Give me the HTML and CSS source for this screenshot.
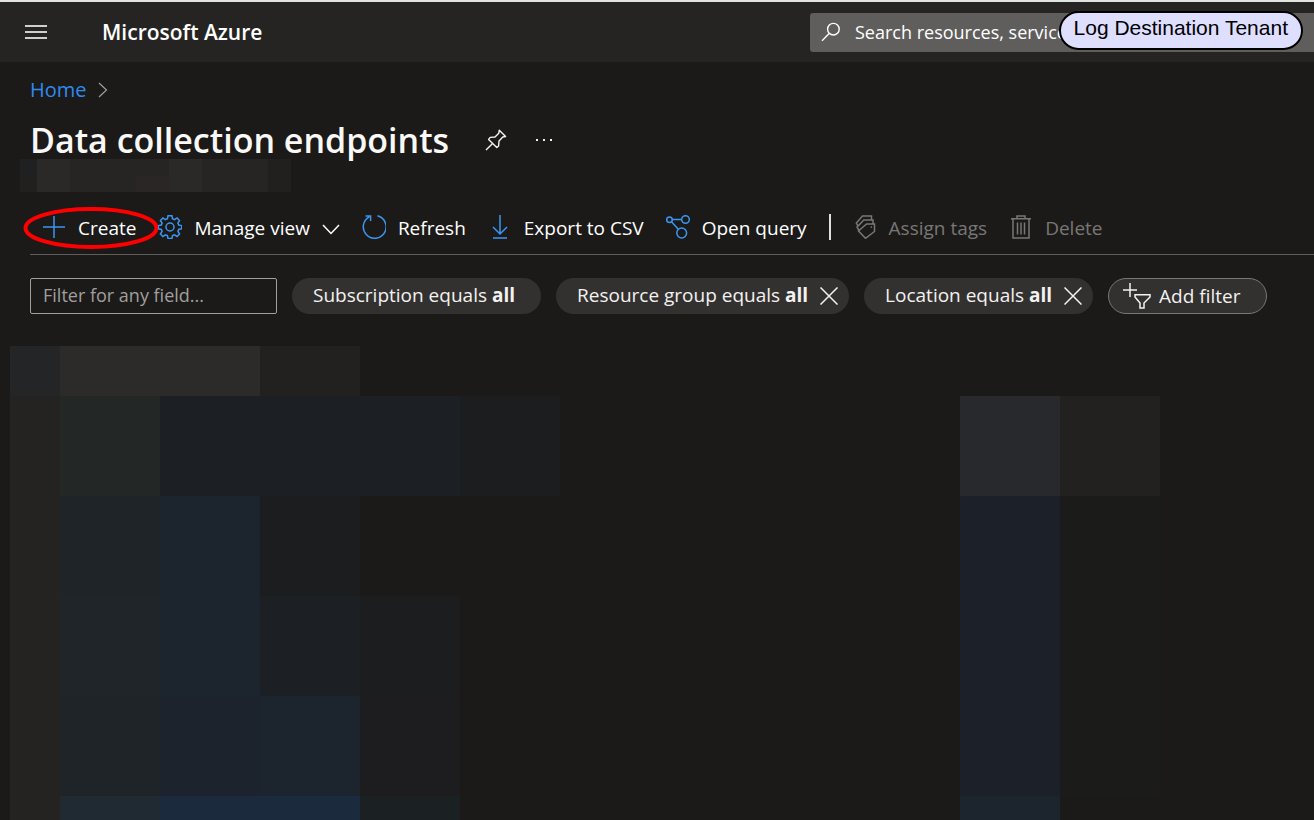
FILE: index.html
```html
<!DOCTYPE html>
<html lang="en">
<head>
<meta charset="utf-8">
<meta name="viewport" content="width=device-width, initial-scale=1">
<title>Data collection endpoints - Microsoft Azure</title>
<link rel="stylesheet" href="styles.css">
</head>
<body>
<header class="topbar">
  <button class="icon-button menu-button" type="button" aria-label="Show portal menu">
    <svg width="22" height="16" viewBox="0 0 22 16" fill="none" stroke="#d0cfce" stroke-width="2"><path d="M0 2h22M0 8h22M0 14h22"/></svg>
  </button>
  <span class="brand">Microsoft Azure</span>
  <div class="search">
    <svg width="20" height="20" viewBox="0 0 20 20" fill="none" stroke="#fff" stroke-width="1.4"><circle cx="12.4" cy="7.2" r="5.8"/><path d="M8.2 11.4 1 18.8"/></svg>
    <input class="search-input" type="text" aria-label="Search resources and services" placeholder="Search resources, services">
  </div>
  <div class="tenant-badge">Log Destination Tenant</div>
</header>

<main class="page">
  <nav class="breadcrumb" aria-label="Breadcrumb">
    <a class="crumb" href="#">Home</a>
    <svg width="10" height="16" viewBox="0 0 10 16" fill="none" stroke="#a19f9d" stroke-width="1.2"><path d="M1 1l7.5 7L1 15"/></svg>
  </nav>

  <div class="title-row">
    <h1 class="title">Data collection endpoints</h1>
    <button class="icon-button" type="button" aria-label="Pin to dashboard">
      <svg width="22" height="22" viewBox="0 0 22 22" fill="none" stroke="#f3f2f1" stroke-width="1.4" stroke-linejoin="round"><path d="M14.3 1.2 20.6 7.5 17.8 8 14 12 13.6 17 11.8 18.6 3.6 10.4 5.2 8.4 10 8 13.8 4.2ZM7.6 14.4 1 21"/></svg>
    </button>
    <button class="icon-button more-button" type="button" aria-label="More">
      <svg width="18" height="4" viewBox="0 0 18 4" fill="#f3f2f1"><path d="M1 1h2v2H1zM8 1h2v2H8zM15 1h2v2h-2z"/></svg>
    </button>
  </div>

  <div class="redacted-name" aria-hidden="true">
    <i class="n1"></i><i class="n3"></i><i class="n2"></i><i class="n2"></i><i class="n2"></i><i class="n3"></i><i class="n2"></i><i class="n2"></i><i class="n4"></i>
    <i class="n4"></i><i class="n3"></i><i class="n2"></i><i class="n2"></i><i class="n5"></i><i class="n3"></i><i class="n2"></i><i class="n2"></i><i class="n4"></i>
  </div>

  <div class="toolbar" role="toolbar" aria-label="Commands">
    <button class="command create" type="button">
      <svg class="icon" viewBox="0 0 24 24"><path d="M12 1v22M1 12h22"/></svg>
      <span>Create</span>
      <svg class="highlight" viewBox="0 0 136 44" aria-hidden="true"><ellipse cx="68" cy="22" rx="65.5" ry="19"/></svg>
    </button>
    <button class="command" type="button">
      <svg class="icon" viewBox="0 0 24 24"><path d="M10 .8h4l.5 3 2 .9 2.6-1.8 2.4 2.600-1.600 2.600.8 2 3 .5v3.200l-3 .6-.8 2 1.700 2.600-2.500 2.500-2.600-1.700-2 .8-.5 2.900h-4l-.6-2.900-2-.8-2.500 1.700-2.500-2.500 1.700-2.600-.8-2-3-.6v-3.200l3-.5.8-2-1.700-2.600 2.500-2.600 2.500 1.800 2-.9Z"/><circle cx="12" cy="12" r="4"/></svg>
      <span>Manage view</span>
      <svg class="chevron" width="18" height="12" viewBox="0 0 18 12"><path d="M1 2l8 8.400 8-8.400"/></svg>
    </button>
    <button class="command" type="button">
      <svg class="icon" viewBox="0 0 24 24"><path d="M15.500 .8A11.400 11.400 0 1 1 7.300 1.800M3.500 1H8.600V6.100"/></svg>
      <span>Refresh</span>
    </button>
    <button class="command" type="button">
      <svg class="icon" viewBox="0 0 24 24"><path d="M12 0v18M5 12l7 7 7-7M5 23h14"/></svg>
      <span>Export to CSV</span>
    </button>
    <button class="command" type="button">
      <svg class="icon" viewBox="0 0 24 24"><circle cx="3.500" cy="4.700" r="2.800"/><circle cx="19.500" cy="4.500" r="3.800"/><circle cx="15.700" cy="18" r="4.900"/><path d="M6.300 4.600h9.400M5.500 6.700l6.800 7.500"/></svg>
      <span>Open query</span>
    </button>
    <span class="divider"></span>
    <button class="command" type="button" disabled>
      <svg class="icon" viewBox="0 0 24 24"><path d="M5.300 11.500 3.300 8 9.500.9h9V4.500M6 15.500 4 12.200 10.800 5H20v3.800M13.500 9h8v7.500l-9 6.800L5.500 16Z"/><path d="M18.300 11.400v1.400"/></svg>
      <span>Assign tags</span>
    </button>
    <button class="command" type="button" disabled>
      <svg class="icon" viewBox="0 0 24 24"><path d="M2 3.700h20M8 3.500V1h8v2.500M4 4v19h16V4M8.500 7.500v12M12 7.500v12M15.500 7.500v12"/></svg>
      <span>Delete</span>
    </button>
  </div>

  <div class="filters">
    <input class="filter-input" type="text" aria-label="Filter for any field" placeholder="Filter for any field...">
    <button class="pill" type="button"><span>Subscription equals <b>all</b></span></button>
    <div class="pill">
      <span>Resource group equals <b>all</b></span>
      <button class="icon-button" type="button" aria-label="Remove resource group filter"><svg class="close" width="18" height="18" viewBox="0 0 18 18"><path d="M.5.500l17 17M17.500.500l-17 17"/></svg></button>
    </div>
    <div class="pill">
      <span>Location equals <b>all</b></span>
      <button class="icon-button" type="button" aria-label="Remove location filter"><svg class="close" width="18" height="18" viewBox="0 0 18 18"><path d="M.5.500l17 17M17.500.500l-17 17"/></svg></button>
    </div>
    <button class="pill add-filter" type="button">
      <svg width="28" height="26" viewBox="0 0 28 26"><path d="M7 0v14M0 7h14M12 11.700h15v2.300l-6 6v5h-4v-5l-5-6Z"/></svg>
      <span>Add filter</span>
    </button>
  </div>

  <div class="redacted-list" aria-hidden="true">
    <i class="cell r1 c1 slate"></i><i class="cell r1 c2 w2 stone"></i><i class="cell r1 c4 dim"></i>
    <i class="cell r2 c1 tall edge"></i>
    <i class="cell r2 c2 moss"></i><i class="cell r2 c3 w3 navy"></i><i class="cell r2 c6 haze"></i>
    <i class="cell r3 c2 teal"></i><i class="cell r3 c3 blue"></i><i class="cell r3 c4 ink"></i>
    <i class="cell r4 c2 teal2"></i><i class="cell r4 c3 blue"></i><i class="cell r4 c4 navy"></i><i class="cell r4 c5 haze"></i>
    <i class="cell r5 c2 teal"></i><i class="cell r5 c3 blue2"></i><i class="cell r5 c4 blue"></i><i class="cell r5 c5 plum"></i>
    <i class="cell r6 c2 sea"></i><i class="cell r6 c3 w2 royal"></i><i class="cell r6 c5 pine"></i>
    <i class="cell r2 c11 steel"></i><i class="cell r2 c12 dim"></i>
    <i class="cell r3 c11 h3 dusk"></i><i class="cell r3 c12 h3 faint"></i>
    <i class="cell r6 c11 blue3"></i>
  </div>
</main>
</body>
</html>
```
FILE: styles.css
```css
* { box-sizing: border-box; }

body {
  margin: 0;
  min-height: 100vh;
  display: flex;
  flex-direction: column;
  overflow-x: hidden;
  background: #1b1a19;
  color: #fff;
  font: 19px/28px "Open Sans", "Noto Sans", sans-serif;
}

button, input { font: inherit; color: inherit; }
button { margin: 0; padding: 0; border: 0; background: none; white-space: nowrap; }
svg { display: block; flex: none; }

.icon-button { display: flex; align-items: center; justify-content: center; }

/* Top bar */
.topbar {
  position: relative;
  display: flex;
  align-items: center;
  height: 62px;
  padding-left: 25px;
  border-top: 2px solid #dfe3e1;
  background: #252423;
}
.brand { flex: 1; margin-left: 55px; font-size: 21px; line-height: 30px; font-weight: 600; }
.search {
  display: flex;
  align-items: center;
  gap: 14px;
  width: 504px;
  height: 39px;
  padding-left: 11px;
  border-radius: 3px 0 0 3px;
  background: #605e5c;
}
.search-input { flex: 1; min-width: 0; padding: 0; border: 0; background: none; outline: 0; font-size: 18px; }
.search-input::placeholder { color: #fff; opacity: 1; }
.tenant-badge {
  position: absolute;
  top: 9px;
  right: 11px;
  height: 39px;
  padding: 0 13px;
  border: 2px solid #000;
  border-radius: 20px;
  background: #dedeff;
  color: #000;
  font: 21px/30px "Liberation Sans", Arial, sans-serif;
  white-space: nowrap;
}

/* Heading */
.page { flex: 1; display: flex; flex-direction: column; }
.breadcrumb { display: flex; align-items: center; gap: 11px; padding: 14px 30px 0; }
.crumb { color: #2f8af0; font-size: 20px; text-decoration: none; }
.title-row { display: flex; align-items: center; padding: 17px 30px 0; }
.title { margin: 0 36px 0 0; font-size: 34px; line-height: 38px; font-weight: 600; color: #faf9f8; }
.more-button { margin-left: 28px; }

.redacted-name {
  display: grid;
  grid-template-columns: 17px repeat(7, 33px) 23px;
  grid-template-rows: 17px 16px;
  margin-left: 20px;
}
.n1 { background: #1f2021; }
.n2 { background: #262524; }
.n3 { background: #2a2928; }
.n4 { background: #21201f; }
.n5 { background: #2a2625; }

/* Commands */
.toolbar {
  display: flex;
  align-items: center;
  gap: 22px;
  height: 63px;
  margin-left: 30px;
  padding: 8px 0 0 12px;
  border-bottom: 1px solid #605e5c;
}
.command { position: relative; display: flex; align-items: center; gap: 12px; }
.command span { padding-top: 2px; }
.command:disabled { color: #797775; }
.icon { width: 24px; height: 24px; fill: none; stroke: #3a96f0; stroke-width: 1.5; }
.command:disabled .icon { stroke: #797775; }
.chevron { margin-top: 4px; fill: none; stroke: #fff; stroke-width: 1.5; }
.highlight {
  position: absolute;
  top: -6px;
  left: -19px;
  width: 136px;
  height: 44px;
  fill: none;
  stroke: #f00;
  stroke-width: 4;
  pointer-events: none;
}
.divider { width: 2px; height: 26px; background: #e1dfdd; }

/* Filters */
.filters { display: flex; align-items: center; gap: 15px; padding: 23px 30px 0; }
.filter-input {
  width: 247px;
  height: 36px;
  padding: 0 12px 2px;
  border: 1px solid #a19f9d;
  border-radius: 2px;
  background: #1b1a19;
  font-size: 18px;
}
.filter-input::placeholder { color: #a19f9d; opacity: 1; }
.pill {
  display: flex;
  align-items: center;
  gap: 12px;
  height: 36px;
  padding: 0 11px 0 21px;
  border-radius: 18px;
  background: #323130;
  color: #f3f2f1;
  white-space: nowrap;
}
.pill > span { padding-bottom: 2px; }
button.pill { padding-right: 26px; }
.close { fill: none; stroke: #f3f2f1; stroke-width: 1.5; }
.pill.add-filter { gap: 8px; padding: 0 26px 0 14px; border: 1px solid #797775; }
.pill.add-filter > span { padding-bottom: 0; }
.add-filter svg { fill: none; stroke: #f3f2f1; stroke-width: 1.5; }

/* Obscured result list */
.redacted-list {
  flex: 1;
  display: grid;
  grid-template-columns: 50px repeat(11, 100px);
  grid-template-rows: 50px repeat(4, 100px) minmax(24px, 1fr);
  margin: 32px 0 0 10px;
}
.r1 { grid-row: 1; } .r2 { grid-row: 2; } .r3 { grid-row: 3; }
.r4 { grid-row: 4; } .r5 { grid-row: 5; } .r6 { grid-row: 6; }
.c1 { grid-column: 1; } .c2 { grid-column: 2; } .c3 { grid-column: 3; }
.c4 { grid-column: 4; } .c5 { grid-column: 5; } .c6 { grid-column: 6; }
.c11 { grid-column: 11; } .c12 { grid-column: 12; }
.w2 { grid-column-end: span 2; }
.w3 { grid-column-end: span 3; }
.h3 { grid-row-end: span 3; }
.tall { grid-row-end: span 5; }
.slate { background: #242526; }
.stone { background: #2c2b29; }
.dim { background: #22211f; }
.edge { background: #252321; }
.moss { background: #232827; }
.navy { background: #1c1f24; }
.haze { background: #1b1d1e; }
.teal { background: #1e2427; }
.teal2 { background: #1f2528; }
.blue { background: #1c252e; }
.blue2 { background: #1c232d; }
.blue3 { background: #1c242d; }
.ink { background: #1c1d1e; }
.plum { background: #1d1d20; }
.sea { background: #1f2a33; }
.royal { background: #1c2a3d; }
.pine { background: #1b2023; }
.steel { background: #28292c; }
.dusk { background: #1c2028; }
.faint { background: #1b1b19; }
```
